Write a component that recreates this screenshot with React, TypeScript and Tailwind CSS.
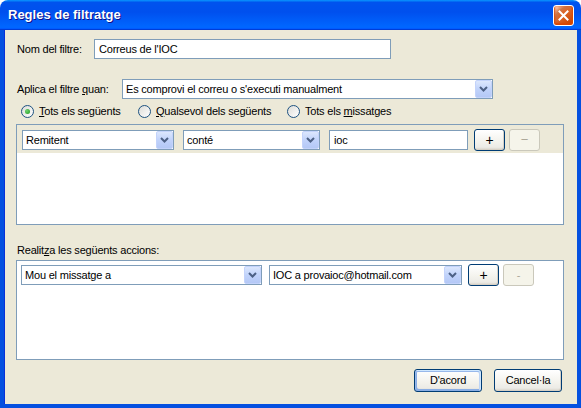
import React from "react";

const font = { fontFamily: '"Liberation Sans", Arial, sans-serif' };

function Chevron() {
  return (
    <svg width="9" height="6" viewBox="0 0 9 6">
      <polyline points="1,1 4.5,4.5 8,1" fill="none" stroke="#4d6185" strokeWidth="2" />
    </svg>
  );
}

function Select({ w, text }: { w: string; text: string }) {
  return (
    <div className={`${w} h-[20px] border border-[#7f9db9] bg-white flex items-stretch shrink-0`}>
      <span className="flex-1 pl-[3px] leading-[18px] truncate">{text}</span>
      <div className="w-[17px] flex items-center justify-center bg-[linear-gradient(180deg,#dce7fd,#c1d3fb_50%,#b4c8f6)] border border-[#c3d3fb] rounded-[2px]">
        <Chevron />
      </div>
    </div>
  );
}

function XPButton({
  w,
  h,
  children,
  disabled,
  def,
}: {
  w: string;
  h: string;
  children: React.ReactNode;
  disabled?: boolean;
  def?: boolean;
}) {
  if (disabled) {
    return (
      <div className={`${w} ${h} shrink-0 rounded-[3px] border border-[#cac8bb] bg-[#f5f4ea] text-[#aca899] flex items-center justify-center`}>
        {children}
      </div>
    );
  }
  return (
    <div
      className={`${w} ${h} shrink-0 rounded-[3px] border border-[#003c74] bg-[linear-gradient(180deg,#ffffff,#f3f2ec_60%,#ecebe6_86%,#d6d0c5)] flex items-center justify-center ${
        def
          ? "shadow-[inset_-1px_1px_#cee7ff,inset_1px_2px_#98b8ea,inset_-2px_2px_#bcd4f6,inset_1px_-1px_#89ade4,inset_2px_-2px_#89ade4]"
          : "shadow-[inset_-1px_-1px_#d6d0c5]"
      }`}
    >
      {children}
    </div>
  );
}

function Radio({ checked }: { checked?: boolean }) {
  return (
    <div className="w-[13px] h-[13px] rounded-full border border-[#1d5281] bg-[linear-gradient(135deg,#dcdcd7,#ffffff)] flex items-center justify-center shrink-0">
      {checked && <div className="w-[5px] h-[5px] rounded-full bg-[radial-gradient(circle_at_35%_35%,#6fd46f,#1e9a1e)]" />}
    </div>
  );
}

export default function App() {
  return (
    <div className="w-[581px] h-[408px] flex flex-col text-[11px] tracking-[-0.2px] text-black" style={font}>
      <div className="h-[30px] shrink-0 rounded-t-[8px] bg-[linear-gradient(180deg,#0997ff,#0053ee_8%,#0050ee_40%,#0066ff_88%,#0066ff_93%,#005bff_95%,#003dd7_96%,#003dd7)] flex items-center justify-between pl-[8px] pr-[7px]">
        <span
          className="text-white font-bold text-[13px] tracking-normal [text-shadow:1px_1px_#0f1089]"
          style={font}
        >
          Regles de filtratge
        </span>
        <div className="w-[21px] h-[21px] rounded-[3px] border border-white bg-[radial-gradient(circle_at_90%_90%,#cc4600_0,#dc6527_55%,#cd7546_70%,#ffccb2_90%,#ffffff_100%)] shadow-[inset_0_-1px_2px_1px_#da4600] flex items-center justify-center">
          <svg width="11" height="11" viewBox="0 0 11 11">
            <path d="M1.5 1.5 L9.5 9.5 M9.5 1.5 L1.5 9.5" stroke="#fff" strokeWidth="2" strokeLinecap="square" />
          </svg>
        </div>
      </div>

      <div className="flex-1 flex flex-col bg-[#ece9d8] border-x-4 border-b-4 border-[#0450e0] shadow-[inset_1px_0_#0831d9]">
        <div className="flex items-center mt-[9px] pl-[13px]">
          <span className="w-[77px]">Nom del filtre:</span>
          <div className="w-[297px] h-[20px] border border-[#7f9db9] bg-white pl-[4px] leading-[18px]">
            Correus de l'IOC
          </div>
        </div>

        <div className="flex items-center mt-[20px] pl-[13px]">
          <span className="w-[105px]">
            Aplica el filtre <u>q</u>uan:
          </span>
          <Select w="w-[371px]" text="Es comprovi el correu o s'executi manualment" />
        </div>

        <div className="flex items-center h-[14px] mt-[5px] pl-[17px]">
          <div className="w-[117px] flex items-center gap-[5px]">
            <Radio checked />
            <span>
              <u>T</u>ots els següents
            </span>
          </div>
          <div className="w-[149px] flex items-center gap-[5px]">
            <Radio />
            <span>
              <u>Q</u>ualsevol dels següents
            </span>
          </div>
          <div className="flex items-center gap-[5px]">
            <Radio />
            <span>
              Tots els <u>m</u>issatges
            </span>
          </div>
        </div>

        <div className="mt-[6px] ml-[12px] w-[548px] h-[101px] border border-[#7f9db9] bg-white flex flex-col">
          <div className="bg-[#ece9d8] flex items-center pl-[5px] pt-[5px] pb-[3px] h-[28px]">
            <Select w="w-[152px]" text="Remitent" />
            <div className="w-[9px]" />
            <Select w="w-[137px]" text="conté" />
            <div className="w-[9px]" />
            <div className="w-[139px] h-[20px] border border-[#7f9db9] bg-white pl-[4px] leading-[18px] shrink-0">ioc</div>
            <div className="w-[6px]" />
            <XPButton w="w-[31px]" h="h-[22px]">
              <span className="text-[14px]">+</span>
            </XPButton>
            <div className="w-[4px]" />
            <XPButton w="w-[31px]" h="h-[22px]" disabled>
              <span className="text-[13px]">−</span>
            </XPButton>
          </div>
        </div>

        <div className="mt-[18px] pl-[13px] h-[14px] leading-[14px]">
          Realit<u>z</u>a les següents accions:
        </div>

        <div className="mt-[3px] ml-[12px] w-[548px] h-[100px] border border-[#7f9db9] bg-white flex flex-col">
          <div className="flex items-center pl-[4px] pt-[3px]">
            <Select w="w-[241px]" text="Mou el missatge a" />
            <div className="w-[7px]" />
            <Select w="w-[193px]" text="IOC a provaioc@hotmail.com" />
            <div className="w-[6px]" />
            <XPButton w="w-[31px]" h="h-[22px]">
              <span className="text-[14px]">+</span>
            </XPButton>
            <div className="w-[4px]" />
            <XPButton w="w-[31px]" h="h-[22px]" disabled>
              <span>-</span>
            </XPButton>
          </div>
        </div>

        <div className="mt-[9px] flex justify-end gap-[12px] pr-[15px]">
          <XPButton w="w-[68px]" h="h-[23px]" def>
            D'acord
          </XPButton>
          <XPButton w="w-[68px]" h="h-[23px]">
            Cancel·la
          </XPButton>
        </div>
      </div>
    </div>
  );
}
